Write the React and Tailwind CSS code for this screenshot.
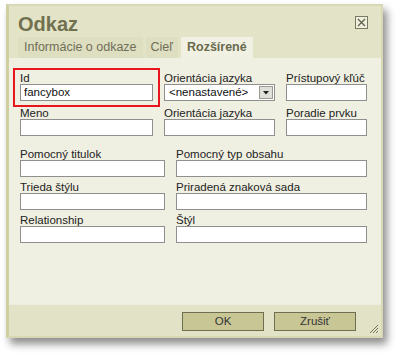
export default function App() {
  const font = { fontFamily: "'Liberation Sans', Arial, sans-serif" };
  const input = "h-[17px] border border-[#8f8f8f] bg-white";
  const label = "h-[12px] leading-[13px] text-[11.5px] text-[#222] whitespace-nowrap";

  return (
    <div className="w-[399px] h-[354px] bg-white pt-[4px] pl-[6px]" style={font}>
      <div className="relative w-[377px] h-[334px] flex flex-col border-2 border-[#d8d8b4] border-l-[3px] border-l-[#cfcfa2] shadow-[4px_6px_8px_rgba(0,0,0,0.45)]">
        {/* header */}
        <div className="bg-[#e3e3c8] h-[52px] flex flex-col">
          <div className="flex items-start justify-between pl-[9px] pr-[13px] pt-[6px] h-[31px]">
            <div className="text-[20px] leading-[24px] font-bold text-[#71714f]">Odkaz</div>
            <svg width="13" height="13" viewBox="0 0 13 13" className="mt-[4px]">
              <rect x="0.5" y="0.5" width="12" height="12" fill="#eeeedf" stroke="#7a7a60" />
              <path d="M3 3 L10 10 M10 3 L3 10" stroke="#5d5d48" strokeWidth="1.2" />
            </svg>
          </div>
          <div className="flex items-end gap-[3px] pl-[9px] h-[21px]">
            <div className="h-[21px] px-[6px] flex items-center bg-[#dedec0] text-[12.5px] text-[#6f6f58]">Informácie o odkaze</div>
            <div className="h-[21px] px-[5px] flex items-center bg-[#dedec0] text-[12.5px] text-[#6f6f58]">Cieľ</div>
            <div className="h-[21px] px-[6px] flex items-center bg-[#f1f1e3] text-[12.5px] font-bold text-[#6a6a4e]">Rozšírené</div>
          </div>
        </div>

        {/* content */}
        <div className="flex-1 bg-[#f0f0e2] pt-[10px] pl-[4px]">
          <div className="flex">
            <div className="w-[147px] h-[39px] border-2 border-[#e8161c] px-[5px] pt-[2px]">
              <div className={label}>Id</div>
              <div className={`${input} w-[133px] text-[11.5px] leading-[15px] pl-[3px] text-[#111]`}>fancybox</div>
            </div>
            <div className="ml-[4px] pt-[4px] w-[111px]">
              <div className={label}>Orientácia jazyka</div>
              <div className="h-[17px] w-[111px] border border-[#8f8f8f] bg-white flex items-center justify-between pl-[4px] pr-[1px] text-[11.5px] text-[#111]">
                <span>&lt;nenastavené&gt;</span>
                <div className="w-[14px] h-[13px] bg-[#e0e0da] border border-[#9a9a90] flex items-center justify-center">
                  <svg width="6" height="4" viewBox="0 0 6 4"><path d="M0 0 H6 L3 3.5 Z" fill="#222" /></svg>
                </div>
              </div>
            </div>
            <div className="ml-[11px] pt-[4px]">
              <div className={label}>Prístupový kľúč</div>
              <div className={`${input} w-[81px]`} />
            </div>
          </div>

          <div className="flex pl-[7px]">
            <div className="w-[133px]">
              <div className={label}>Meno</div>
              <div className={`${input} w-[133px]`} />
            </div>
            <div className="ml-[11px] w-[111px]">
              <div className={label}>Orientácia jazyka</div>
              <div className={`${input} w-[111px]`} />
            </div>
            <div className="ml-[11px]">
              <div className={label}>Poradie prvku</div>
              <div className={`${input} w-[81px]`} />
            </div>
          </div>

          <div className="grid grid-cols-[145px_191px] gap-x-[11px] gap-y-[4px] pl-[7px] mt-[12px]">
            {[
              ["Pomocný titulok", "Pomocný typ obsahu"],
              ["Trieda štýlu", "Priradená znaková sada"],
              ["Relationship", "Štýl"],
            ].map((row) =>
              row.map((t) => (
                <div key={t}>
                  <div className={label}>{t}</div>
                  <div className={input} />
                </div>
              ))
            )}
          </div>
        </div>

        {/* footer */}
        <div className="h-[32px] bg-[#e2e2c6] border-t border-[#ecece0] flex items-start justify-end gap-[10px] pt-[7px] pr-[25px]">
          <div className="w-[82px] h-[19px] bg-[#c9c696] border border-[#6e6e50] flex items-center justify-center text-[11.5px] text-[#333]">OK</div>
          <div className="w-[82px] h-[19px] bg-[#c9c696] border border-[#6e6e50] flex items-center justify-center text-[11.5px] text-[#333]">Zrušiť</div>
        </div>
        <svg width="12" height="12" viewBox="0 0 12 12" className="absolute right-[2px] bottom-[2px]">
          <path d="M11 3 L3 11 M11 6 L6 11 M11 9 L9 11" stroke="#77775c" strokeWidth="1" />
        </svg>
      </div>
    </div>
  );
}
